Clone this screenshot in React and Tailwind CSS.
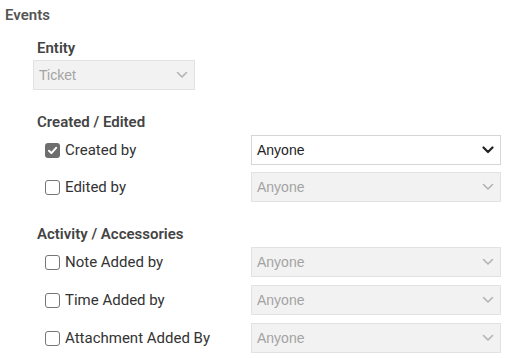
import React from "react";

function Chevron({ disabled }) {
  return (
    <svg width="12" height="8" viewBox="0 0 12 8" className="shrink-0">
      <path
        d="M1.5 1.5 L6 6 L10.5 1.5"
        fill="none"
        stroke={disabled ? "#b3b3b3" : "#222"}
        strokeWidth={disabled ? 1.6 : 2.2}
        strokeLinecap="round"
        strokeLinejoin="round"
      />
    </svg>
  );
}

function Select({ value, disabled, className = "" }) {
  return (
    <div
      className={`flex items-center justify-between h-[30px] border pl-[5px] pr-[6px] text-[14px] font-['Liberation_Sans',Arial,sans-serif] ${
        disabled
          ? "bg-[#f2f2f2] border-[#e2e2e2] text-[#a3a3a3]"
          : "bg-white border-[#d6d6d6] text-[#222]"
      } ${className}`}
    >
      <span>{value}</span>
      <Chevron disabled={disabled} />
    </div>
  );
}

function Checkbox({ checked }) {
  return checked ? (
    <span className="flex items-center justify-center w-[15px] h-[15px] rounded-[3px] bg-[#6e6e6e]">
      <svg width="11" height="11" viewBox="0 0 10 10">
        <path d="M1.8 5.2 L4 7.4 L8.3 2.6" fill="none" stroke="#fff" strokeWidth="1.8" strokeLinecap="round" strokeLinejoin="round" />
      </svg>
    </span>
  ) : (
    <span className="block w-[15px] h-[15px] rounded-[3px] border border-[#767676] bg-white" />
  );
}

function Row({ label, checked }) {
  return (
    <div className="flex items-center">
      <div className="flex items-center w-[218px] pl-[12px]">
        <Checkbox checked={checked} />
        <span className="ml-[5px] text-[15px] leading-[18px] text-[#333]">{label}</span>
      </div>
      <Select value="Anyone" disabled={!checked} className="w-[250px]" />
    </div>
  );
}

export default function App() {
  return (
    <div className="w-[513px] h-[358px] bg-white pl-[5px] pt-[6px] font-['Roboto',sans-serif] overflow-hidden">
      <div className="text-[15px] leading-[18px] font-semibold text-[#555]">Events</div>

      <div className="ml-[28px]">
        <div className="mt-[15px] pl-[4px] text-[15px] leading-[18px] font-semibold text-[#444]">Entity</div>
        <Select value="Ticket" disabled className="mt-[3px] w-[162px]" />

        <div className="mt-[23px] pl-[4px] text-[15px] leading-[18px] font-semibold text-[#444]">Created / Edited</div>
        <div className="mt-[4px] flex flex-col gap-[7px]">
          <Row label="Created by" checked />
          <Row label="Edited by" />
        </div>

        <div className="mt-[23px] pl-[4px] text-[15px] leading-[18px] font-semibold text-[#444]">Activity / Accessories</div>
        <div className="mt-[4px] flex flex-col gap-[8px]">
          <Row label="Note Added by" />
          <Row label="Time Added by" />
          <Row label="Attachment Added By" />
        </div>
      </div>
    </div>
  );
}
